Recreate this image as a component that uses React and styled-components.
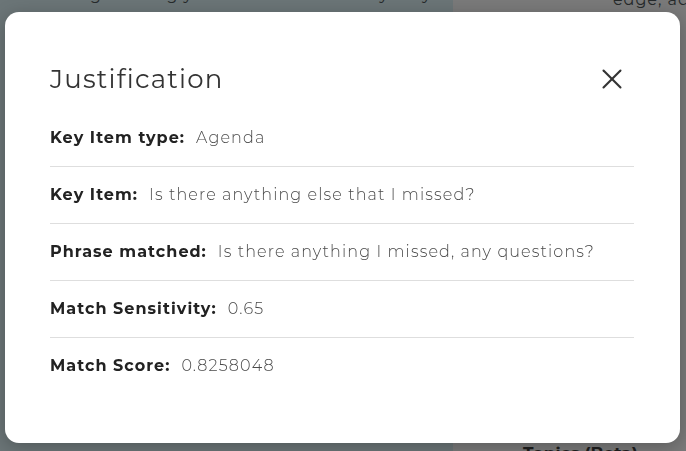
import React from 'react';
import styled, { createGlobalStyle } from 'styled-components';
import { X } from 'lucide-react';

const GlobalStyle = createGlobalStyle`
  html, body {
    margin: 0;
    padding: 0;
    width: 100%;
    height: 100%;
    overflow: hidden;
  }
  body {
    font-family: Montserrat, Inter, "Open Sans", sans-serif;
    background: #6b7577;
  }
`;

const details = [
  { label: 'Key Item type:', value: 'Agenda' },
  { label: 'Key Item:', value: 'Is there anything else that I missed?' },
  { label: 'Phrase matched:', value: 'Is there anything I missed, any questions?' },
  { label: 'Match Sensitivity:', value: '0.65' },
  { label: 'Match Score:', value: '0.8258048' },
];

const App = () => {
  return (
    <>
      <GlobalStyle />
      <Page>
        <Page.Main>
          <Page.Fragment>gathering your notes so that they may</Page.Fragment>
        </Page.Main>
        <Page.Side>
          <Page.Fragment align="right">edge, ac</Page.Fragment>
          <Page.Footer>Topics (Beta)</Page.Footer>
        </Page.Side>
      </Page>
      <Modal role="dialog" aria-labelledby="justification-title">
        <Modal.Header>
          <Modal.Title id="justification-title">Justification</Modal.Title>
          <Modal.Close aria-label="Close">
            <X size={34} strokeWidth={1.45} />
          </Modal.Close>
        </Modal.Header>
        <Modal.List>
          {details.map((item) => (
            <Modal.Row key={item.label}>
              <Modal.Label>{item.label}</Modal.Label>
              <Modal.Value>{item.value}</Modal.Value>
            </Modal.Row>
          ))}
        </Modal.List>
      </Modal>
    </>
  );
};

const Page = styled.div`
  display: flex;
  width: 100vw;
  height: 100vh;
`;

Page.Main = styled.div`
  flex: 0 0 453px;
  background: #6b7577;
  overflow: hidden;
`;

Page.Side = styled.div`
  flex: 1;
  display: flex;
  flex-direction: column;
  justify-content: space-between;
  background: #7a7a7a;
  overflow: hidden;
`;

Page.Fragment = styled.div`
  margin-top: ${(p) => (p.align === 'right' ? '-10px' : '-15px')};
  padding-left: ${(p) => (p.align === 'right' ? '160px' : '90px')};
  font-size: 16px;
  letter-spacing: 0.06em;
  color: #262a2b;
  white-space: nowrap;
`;

Page.Footer = styled.div`
  padding-left: 70px;
  margin-bottom: -12px;
  font-size: 17px;
  font-weight: 700;
  color: #1f1f1f;
  white-space: nowrap;
`;

const Modal = styled.div`
  position: fixed;
  top: 12px;
  left: 5px;
  width: 675px;
  height: 431px;
  box-sizing: border-box;
  padding: 50px 46px 0 45px;
  background: #ffffff;
  border-radius: 14px;
  box-shadow: 0 4px 18px rgba(0, 0, 0, 0.25);
`;

Modal.Header = styled.div`
  display: flex;
  align-items: center;
  justify-content: space-between;
  margin-bottom: 14px;
`;

Modal.Title = styled.h2`
  margin: 0;
  font-size: 26px;
  line-height: 32px;
  font-weight: 400;
  letter-spacing: 0.046em;
  color: #333333;
`;

Modal.Close = styled.button`
  display: flex;
  align-items: center;
  justify-content: center;
  width: 34px;
  height: 34px;
  margin-right: 5px;
  padding: 0;
  border: none;
  background: none;
  color: #333333;
  cursor: pointer;
`;

Modal.List = styled.div`
  display: flex;
  flex-direction: column;
`;

Modal.Row = styled.div`
  display: flex;
  align-items: baseline;
  gap: 11px;
  padding: 16px 0;
  border-bottom: 1px solid #dedede;

  &:last-child {
    border-bottom: none;
  }
`;

Modal.Label = styled.span`
  font-size: 16px;
  line-height: 24px;
  font-weight: 700;
  letter-spacing: 0.065em;
  color: #222222;
`;

Modal.Value = styled.span`
  font-size: 16px;
  line-height: 24px;
  font-weight: 300;
  letter-spacing: 0.07em;
  color: #4a4a4a;
`;

export default App;
